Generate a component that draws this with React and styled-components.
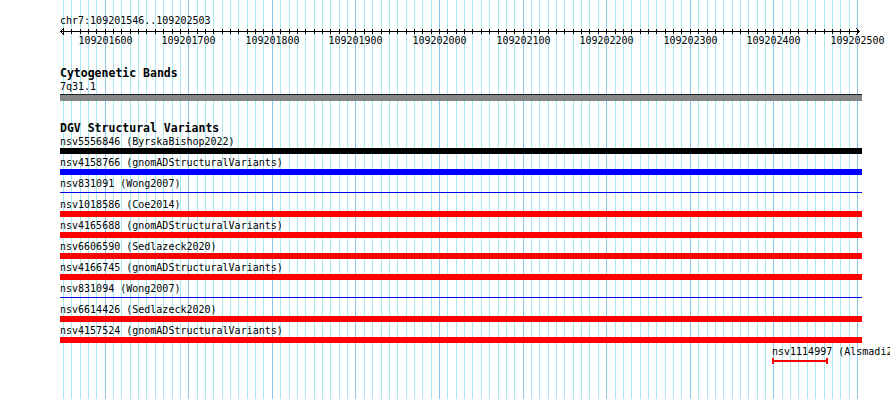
import React from 'react';
import styled, { createGlobalStyle } from 'styled-components';

const START = 109201546;
const END = 109202503;
const VIEW_WIDTH = 800;

const toX = bp => ((bp - START) * VIEW_WIDTH) / (END - START);

const GlobalStyle = createGlobalStyle`
  html, body {
    margin: 0;
    padding: 0;
    background: #fff;
  }
  body {
    font-family: "DejaVu Sans Mono", "Liberation Mono", monospace;
    font-size: 10px;
    color: #000;
  }
`;

const Page = styled.div`
  position: relative;
  width: 890px;
  height: 399px;
  overflow: hidden;
  background: #fff;
`;

const GridLayer = styled.div`
  position: absolute;
  top: 0;
  bottom: 0;
  left: 60px;
  width: 802px;
`;

const GridLine = styled.div`
  position: absolute;
  top: 0;
  bottom: 0;
  width: 1px;
  background: ${p => (p.$major ? '#8cc6ec' : '#a8e8ee')};
`;

const Content = styled.div`
  position: relative;
  display: flex;
  flex-direction: column;
  padding: 15px 0 0 60px;
  width: 802px;
`;

const Label = styled.div`
  height: 12px;
  line-height: 12px;
  white-space: nowrap;
`;

const Ruler = styled.svg`
  display: block;
  width: 802px;
  height: 8px;
`;

const TickLabels = styled.div`
  position: relative;
  height: 12px;
  line-height: 12px;
`;

const TickLabel = styled.span`
  position: absolute;
  top: 0;
  transform: translateX(-50%);
  white-space: nowrap;
`;

const TrackTitle = styled.div`
  height: 12px;
  line-height: ${p => p.$lift}px;
  margin-top: ${p => p.$gap}px;
  font-weight: bold;
  font-size: 11.5px;
  white-space: nowrap;
`;

const Band = styled.div`
  height: 6px;
  margin-top: 1px;
  border-top: 1px solid #222;
  background: #858585;
`;

const FeatureRow = styled.div`
  display: flex;
  flex-direction: column;
  height: 21px;
`;

const FeatureLabel = styled.div`
  height: 13px;
  line-height: 13px;
  white-space: nowrap;
`;

const Glyph = styled.div`
  position: relative;
  height: 6px;
  width: ${p => p.$width}px;
`;

const ThickBar = styled.div`
  height: 6px;
  background: ${p => p.$color};
`;

const ThinLine = styled.div`
  position: absolute;
  left: 0;
  right: 0;
  top: 2px;
  height: ${p => p.$size}px;
  background: ${p => p.$color};
`;

const Cap = styled.div`
  position: absolute;
  top: 0;
  width: 2px;
  height: 6px;
  background: ${p => p.$color};
  ${p => (p.$end ? 'right: 0;' : 'left: 0;')}
`;

const features = [
  { name: 'nsv5556846', source: 'ByrskaBishop2022', color: '#000', style: 'thick' },
  { name: 'nsv4158766', source: 'gnomADStructuralVariants', color: '#0000ff', style: 'thick' },
  { name: 'nsv831091', source: 'Wong2007', color: '#0000ee', style: 'thin' },
  { name: 'nsv1018586', source: 'Coe2014', color: '#ff0000', style: 'thick' },
  { name: 'nsv4165688', source: 'gnomADStructuralVariants', color: '#ff0000', style: 'thick' },
  { name: 'nsv6606590', source: 'Sedlazeck2020', color: '#ff0000', style: 'thick' },
  { name: 'nsv4166745', source: 'gnomADStructuralVariants', color: '#ff0000', style: 'thick' },
  { name: 'nsv831094', source: 'Wong2007', color: '#0000ee', style: 'thin' },
  { name: 'nsv6614426', source: 'Sedlazeck2020', color: '#ff0000', style: 'thick' },
  { name: 'nsv4157524', source: 'gnomADStructuralVariants', color: '#ff0000', style: 'thick' },
  { name: 'nsv1114997', source: 'Alsmadi2014', color: '#ff0000', style: 'capped', start: 109202398, end: 109202465 },
];

const gridPositions = [];
for (let bp = 109201550; bp <= 109202500; bp += 10) {
  gridPositions.push({ bp, x: Math.floor(toX(bp)), major: bp % 100 === 0 });
}

const Feature = ({ feature }) => {
  const left = feature.start ? Math.floor(toX(feature.start)) : 0;
  const width = feature.start ? Math.round(toX(feature.end) - toX(feature.start)) : 802;

  let glyph;
  if (feature.style === 'thick') {
    glyph = <ThickBar $color={feature.color} />;
  } else if (feature.style === 'thin') {
    glyph = <ThinLine $color={feature.color} $size={1} />;
  } else {
    glyph = (
      <>
        <ThinLine $color={feature.color} $size={2} />
        <Cap $color={feature.color} />
        <Cap $color={feature.color} $end />
      </>
    );
  }

  return (
    <FeatureRow style={{ marginLeft: left }}>
      <FeatureLabel>{feature.name} ({feature.source})</FeatureLabel>
      <Glyph $width={width}>{glyph}</Glyph>
    </FeatureRow>
  );
};

const App = () => (
  <Page>
    <GlobalStyle />
    <GridLayer>
      {gridPositions.map(g => (
        <GridLine key={g.bp} $major={g.major} style={{ left: g.x }} />
      ))}
    </GridLayer>
    <Content>
      <Label>chr7:109201546..109202503</Label>
      <Ruler viewBox="0 0 802 8">
        <line x1="0" y1="4.5" x2="800" y2="4.5" stroke="#000" strokeWidth="1" />
        <polyline points="4,1 0.5,4.5 4,8" fill="none" stroke="#000" strokeWidth="1" />
        <polyline points="796,1 799.5,4.5 796,8" fill="none" stroke="#000" strokeWidth="1" />
        {gridPositions.map(g => (
          <line key={g.bp} x1={g.x + 0.5} y1="2" x2={g.x + 0.5} y2="7" stroke="#000" strokeWidth="1" />
        ))}
      </Ruler>
      <TickLabels>
        {gridPositions.filter(g => g.major).map(g => (
          <TickLabel key={g.bp} style={{ left: g.x + 0.5 }}>{g.bp}</TickLabel>
        ))}
      </TickLabels>

      <TrackTitle $gap={22} $lift={8}>Cytogenetic Bands</TrackTitle>
      <Label>7q31.1</Label>
      <Band />

      <TrackTitle $gap={22} $lift={10}>DGV Structural Variants</TrackTitle>
      {features.map(f => (
        <Feature key={f.name} feature={f} />
      ))}
    </Content>
  </Page>
);

export default App;
